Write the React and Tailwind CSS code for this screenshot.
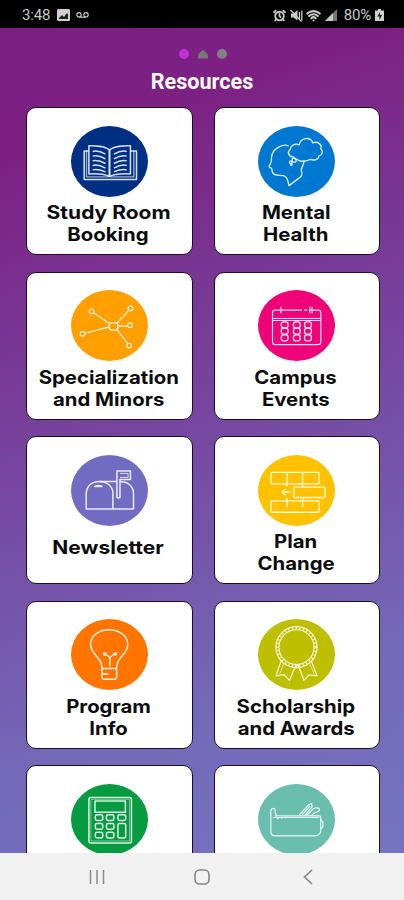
import { AlarmClock, Wifi } from "lucide-react";

function BookIcon() {
  return (
    <g strokeWidth="4.5">
      <path d="M52 75H39v85h75M176 75h18v85h-80" />
      <path d="M46 74v78h66M186 74v78h-70" strokeWidth="4" strokeOpacity="0.6" />
      <path d="M114 72c-12-13-38-12-61-13v84c24-1 48-1 61 8 14-9 38-9 62-8V59c-23 1-50 0-62 13z" />
      <path d="M114 72v78" strokeWidth="6" />
      <path d="M64 76c14-4 24 0 38 8M64 90c14-4 24 0 38 8M64 104c14-4 24 0 38 8M64 118c14-4 24 0 38 8M64 131c14-3 24 0 38 6" />
      <path d="M165 76c-14-4-24 0-38 8M165 90c-14-4-24 0-38 8M165 104c-14-4-24 0-38 8M165 118c-14-4-24 0-38 8M165 131c-14-3-24 0-38 6" />
    </g>
  );
}

function MindIcon() {
  return (
    <g strokeWidth="4">
      <path d="M91 59C74 53 42 66 40 93c-1 8 1 11-2 16l-5 11c-1 4 4 5 7 6l3 12c2 10 18 10 32 10 9 3 12 9 13 16l4 14 34-26c6-5 4-14 2-20 2-12 9-18 8-29" />
      <path d="M116 100c-8 0-10-5-11-8-14 1-20-15-10-22 2-13 14-19 27-14 4-22 34-25 40-6 15-5 29 6 24 18 7 8 5 20-5 21-2 11-15 15-25 11-14 6-32 8-40 0z" />
      <circle cx="107" cy="102" r="6" />
      <circle cx="97" cy="108" r="4" />
      <circle cx="99" cy="116" r="2" />
    </g>
  );
}

function NetworkIcon() {
  return (
    <g strokeWidth="3.5">
      <path d="M66 67l50 35M171 60l-37 42M41 129l73-19M138 108h31M134 115l34 46" />
      <rect x="113" y="98" width="26" height="22" rx="7" strokeWidth="4" />
      <circle cx="61" cy="64" r="7" />
      <circle cx="176" cy="55" r="7" />
      <circle cx="34" cy="131" r="7" />
      <circle cx="175" cy="105" r="7" />
      <circle cx="172" cy="166" r="7" />
    </g>
  );
}

function CalendarIcon() {
  return (
    <g strokeWidth="4">
      <path d="M130 60H51c-5 0-8 3-8 8v87c0 5 3 8 8 8h127c5 0 8-3 8-8V68c0-5-3-8-8-8h-24M136 60h10M43 85h143M43 91h143M68 50v20M153 50v20M160 50v20" strokeWidth="3.5" />
      {[79, 115, 148].map((x) =>
        [104, 123, 143].map((y) => (
          <rect key={`${x}-${y}`} x={x - 10} y={y - 9} width="20" height="18" rx="7" />
        ))
      )}
    </g>
  );
}

function MailboxIcon() {
  return (
    <g strokeWidth="4.5">
      <path d="M45 161V117c0-24 17-38 39-38 23 0 40 15 40 35v47z" />
      <path d="M84 79h52M146 80c24-1 39 15 39 35v46h-61M70 94c6-3 16-3 22 0z" />
      <path d="M136 128V48h40v25h-31v55z" />
      <path d="M145 55h24v12h-24" strokeWidth="2.5" />
    </g>
  );
}

function PlanIcon() {
  return (
    <g strokeWidth="4">
      <rect x="38" y="52" width="143" height="34" rx="3" />
      <rect x="38" y="137" width="143" height="34" rx="3" />
      <rect x="106" y="96" width="92" height="31" rx="3" />
      <path d="M86 53v40M132 53v43M86 127v29M132 127v29M96 111H71M82 102l-11 9 11 9" />
    </g>
  );
}

function BulbIcon() {
  return (
    <g strokeWidth="4.5">
      <path d="M92 148c0-14-4-23-14-34-14-15-20-25-20-38 0-26 25-44 55-44s55 18 55 44c0 13-6 23-20 38-10 11-13 20-13 34z" />
      <path d="M92 148v27c0 3 2 5 5 5h33c3 0 5-2 5-5v-27M94 164h17" />
      <path d="M115 142v-24c0-6-6-9-14-13M115 118c0-6 6-9 15-13" />
      <circle cx="100" cy="104" r="3.5" />
      <circle cx="131" cy="104" r="3.5" />
    </g>
  );
}

function AwardIcon() {
  return (
    <g strokeWidth="3.5">
      <circle cx="114" cy="84" r="61" />
      <circle cx="114" cy="84" r="57" strokeWidth="7" strokeDasharray="4 7" strokeOpacity="0.7" />
      <circle cx="114" cy="84" r="52" />
      <path d="M68 126l-15 44 24-4 16 17 19-44 7-1 17 45 15-16 24 3-17-44" />
      <path d="M76 136l-12 28M154 136l12 28" strokeWidth="2" />
    </g>
  );
}

function CalculatorIcon() {
  return (
    <g strokeWidth="4.5">
      <rect x="53" y="40" width="126" height="136" rx="5" />
      <path d="M59 46v124h114V46z" strokeWidth="1.5" />
      <rect x="71" y="51" width="90" height="33" />
      {[92, 118, 144].map((y) => (
        <g key={y}>
          <rect x="72" y={y} width="22" height="17" rx="5" />
          <rect x="105" y={y} width="22" height="17" rx="5" />
        </g>
      ))}
      <rect x="139" y="92" width="23" height="17" rx="5" />
      <rect x="139" y="118" width="23" height="43" rx="4" />
    </g>
  );
}

function PencilCaseIcon() {
  return (
    <g strokeWidth="3.5">
      <path d="M38 97v44c0 9 6 14 14 14h116c11 0 18-8 18-17V99c0-3-2-4-5-4H50M44 100h138" />
      <path d="M38 97V82c0-7 4-9 8-9 5 0 6 6 4 11l5 11M186 106l6 8v14l-6 6M56 101l6 3M70 100v4" />
      <path d="M121 94l28-31 10-5 1 10-22 26M143 94l21-20c8-5 18-3 18 3s-8 8-12 7l-12 10M130 92l24-27" />
    </g>
  );
}

const resources = [
  { id: "study-room", icon: BookIcon, color: "#002f84", lines: ["Study Room", "Booking"], stretch: "scale-x-[1.135]" },
  { id: "mental-health", icon: MindIcon, color: "#0077d1", lines: ["Mental", "Health"] },
  { id: "minors", icon: NetworkIcon, color: "#ffa000", lines: ["Specialization", "and Minors"] },
  { id: "events", icon: CalendarIcon, color: "#ee0379", lines: ["Campus", "Events"] },
  { id: "newsletter", icon: MailboxIcon, color: "#716cc1", lines: ["Newsletter"], stretch: "scale-x-[1.135]" },
  { id: "plan", icon: PlanIcon, color: "#ffc200", lines: ["Plan", "Change"] },
  { id: "program", icon: BulbIcon, color: "#ff7500", lines: ["Program", "Info"] },
  { id: "awards", icon: AwardIcon, color: "#bdbf00", lines: ["Scholarship", "and Awards"] },
  { id: "calculator", icon: CalculatorIcon, color: "#069a41", lines: [] },
  { id: "supplies", icon: PencilCaseIcon, color: "#69beae", lines: [] },
];

function ResourceCard({ item }) {
  const Icon = item.icon;
  return (
    <button className="flex h-[148px] flex-col items-center rounded-[10px] border border-[#1c0b2c] bg-white pt-[17.5px]" type="button">
      <svg className="h-[71px] w-[77px] shrink-0" viewBox="0 0 228 212" preserveAspectRatio="none" fill="none" stroke="#fff" strokeOpacity="0.85" strokeLinejoin="round">
        <ellipse cx="114" cy="106" rx="114" ry="106" fill={item.color} stroke="none" />
        <Icon />
      </svg>
      <span className={`flex flex-col items-center pr-[2px] ${item.lines.length > 1 ? "mt-[4.5px]" : "mt-[10.5px]"}`}>
        {item.lines.map((line, index) => (
          <span key={line} className={`${index === 0 && item.stretch ? item.stretch : "scale-x-[1.1]"} text-[18.5px] leading-[22.3px] font-bold whitespace-nowrap text-[#0c0c0c]`}>
            {line}
          </span>
        ))}
      </span>
    </button>
  );
}

function StatusBar() {
  return (
    <div className="flex h-7 shrink-0 items-center bg-black pt-[2px] pr-[20px] pl-[22px] font-[Roboto,sans-serif] text-[15px] text-[#c9c9c9]">
      <span className="tracking-[-0.2px]">3:48</span>
      <svg className="ml-[7px] h-3 w-[13px]" viewBox="0 0 13 12">
        <rect width="13" height="12" rx="1.5" fill="#cfcfcf" />
        <path d="M2 9l3-3 2 2 3-4 1 1v5H2z" fill="#222" />
      </svg>
      <svg className="ml-[6px] h-[6px] w-[13px]" viewBox="0 0 13 6" fill="none" stroke="#c9c9c9" strokeWidth="1.2">
        <circle cx="3" cy="2.8" r="2.2" />
        <circle cx="10" cy="2.8" r="2.2" />
        <path d="M3 5.2h7" />
      </svg>
      <div className="ml-auto flex items-center">
        <AlarmClock size={13} strokeWidth={3.4} />
        <svg className="ml-1 h-[13px] w-[13px]" viewBox="0 0 13 13" fill="none" stroke="#c9c9c9" strokeWidth="1.3">
          <path d="M1 4.500h2.500L7.500 1v10.500L3.500 8.500H1z" fill="#c9c9c9" stroke="none" />
          <path d="M9.500 3v7M11.800 1.500v10" />
          <path d="M0.500 1l11 11.500" />
        </svg>
        <Wifi className="ml-[3px]" size={15} strokeWidth={3.4} />
        <svg className="ml-[4px] h-[12px] w-[12px]" viewBox="0 0 12 12">
          <path d="M0 12L12 0v12z" fill="#777" />
          <path d="M0 12L8 4v8z" fill="#c9c9c9" />
        </svg>
        <span className="ml-[7px] text-[15px] tracking-[-0.2px]">80%</span>
        <svg className="ml-[4px] h-3 w-[9px]" viewBox="0 0 9 12">
          <path d="M3 0h3v1.500h3V12H0V1.500h3z" fill="#cfcfcf" />
          <path d="M5 3L2.500 7.500h2V11L7 6H5z" fill="#111" />
        </svg>
      </div>
    </div>
  );
}

function NavBar() {
  return (
    <div className="flex h-[47px] shrink-0 items-center bg-[#f1f1f1] pl-[89px]">
      <svg className="h-4 w-4" viewBox="0 0 16 16" stroke="#8a8a8a" strokeWidth="1.5">
        <path d="M1.500 1v14M8 1v14M14.500 1v14" />
      </svg>
      <svg className="ml-[89px] h-4 w-4" viewBox="0 0 16 16" fill="none" stroke="#858585" strokeWidth="1.6">
        <rect x="1" y="1" width="14" height="14" rx="4.500" />
      </svg>
      <svg className="ml-[93px] h-4 w-[10px]" viewBox="0 0 10 16" fill="none" stroke="#858585" strokeWidth="1.6">
        <path d="M9 1L1.500 8 9 15" />
      </svg>
    </div>
  );
}

function App() {
  return (
    <div className="flex h-[900px] w-[404px] flex-col overflow-hidden font-[Inter,sans-serif]">
      <StatusBar />
      <main className="min-h-0 flex-1 overflow-hidden bg-[linear-gradient(161deg,#7c1f82_0%,#7c2183_14%,#7647a1_48%,#7469b8_78%,#7474c0_100%)]">
        <div className="mt-5 flex h-[11px] items-center justify-center gap-[9px] pl-[2px]">
          <span className="size-[10px] rounded-full bg-[#bf31d6]" />
          <svg className="h-[10px] w-[10px]" viewBox="0 0 10 10">
            <path d="M5 0.500L10 5.500V9.500H0V5.500z" fill="#777" />
          </svg>
          <span className="size-[10px] rounded-full bg-[#818181]" />
        </div>
        <h1 className="mt-[9px] text-center font-[Roboto,sans-serif] text-[21.6px] leading-7 font-bold text-white">Resources</h1>
        <div className="mt-[11px] ml-[26px] grid w-[354px] grid-cols-2 gap-x-[21px] gap-y-[16.5px]">
          {resources.map((item) => (
            <ResourceCard key={item.id} item={item} />
          ))}
        </div>
      </main>
      <NavBar />
    </div>
  );
}

export default App;
